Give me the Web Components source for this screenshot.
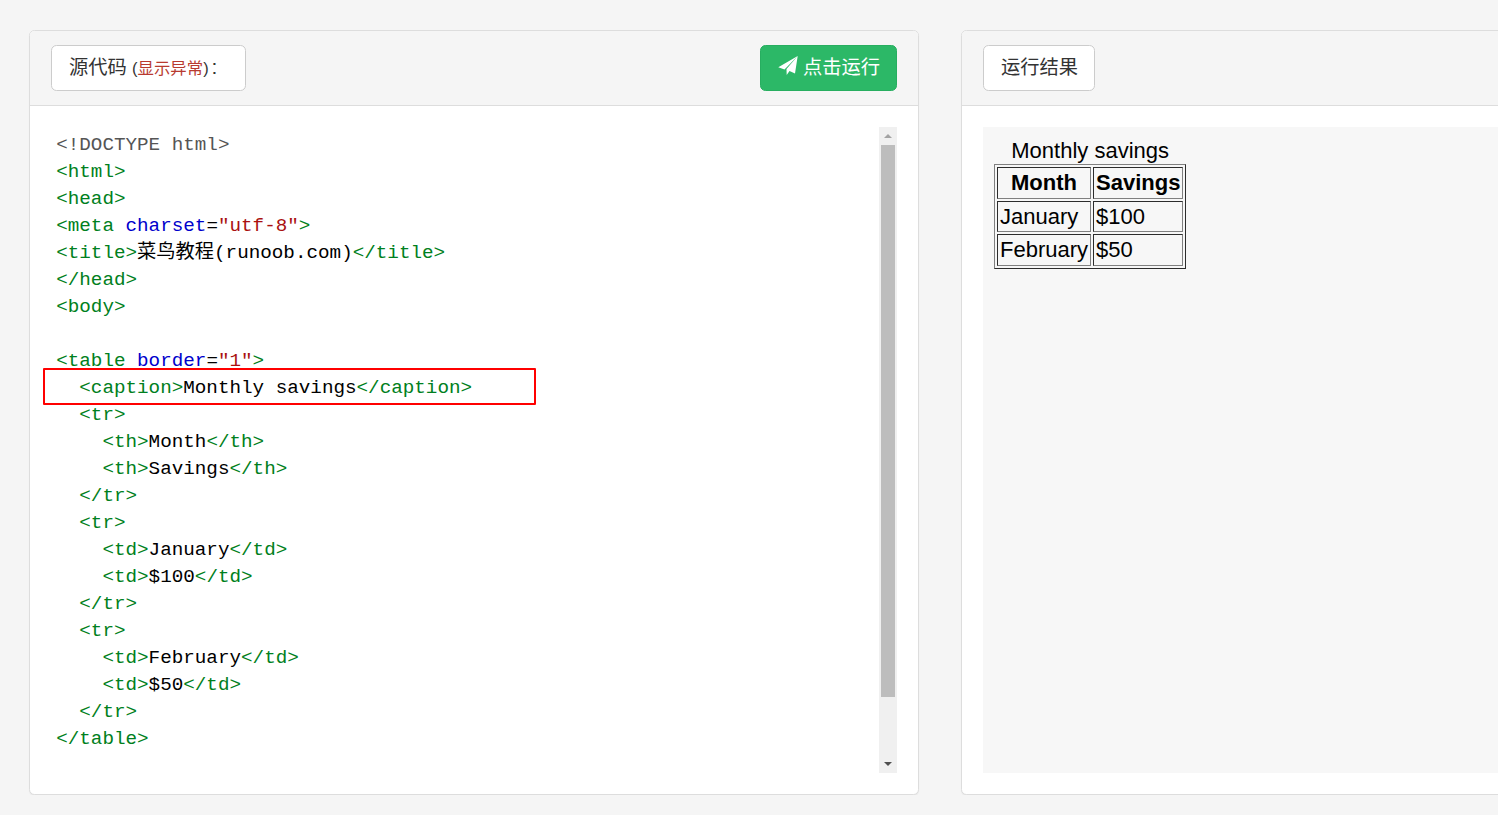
<!DOCTYPE html>
<html lang="zh">
<head>
<meta charset="utf-8">
<title>运行结果</title>
<style>
    html, body { margin: 0; height: 100%; overflow: hidden; background: #f5f5f5; }
    body { font-family: "Liberation Sans", "Noto Sans CJK SC", sans-serif; color: #333; }
    try-label small { font-size: 16.4px; margin-right: 3px; }
    try-label em { font-style: normal; color: #b83a30; }
    try-label b { font-weight: normal; font-size: 21px; line-height: 0; }
</style>
</head>
<body>
<try-page>
    <try-panel>
        <try-label slot="left" style="--pad-right: 28px">源代码 <small>(<em>显示异常</em>)</small><b>:</b></try-label>
        <try-run slot="right">点击运行</try-run>
        <code-view></code-view>
    </try-panel>
    <try-panel>
        <try-label slot="left">运行结果</try-label>
        <result-view></result-view>
    </try-panel>
</try-page>

<script>
// Page shell: two panels side by side, the second one runs off the window
class TryPage extends HTMLElement {
    constructor() {
        super();
        this.attachShadow({ mode: 'open' }).innerHTML = `
            <style>
                :host {
                    display: grid;
                    grid-template-columns: 890px 890px;
                    column-gap: 42px;
                    padding: 30px 0 0 29px;
                    width: 1469px;
                    overflow: hidden;
                }
            </style>
            <slot></slot>
        `;
    }
}

class TryPanel extends HTMLElement {
    constructor() {
        super();
        this.attachShadow({ mode: 'open' }).innerHTML = `
            <style>
                :host {
                    display: flex;
                    flex-direction: column;
                    box-sizing: border-box;
                    height: 765px;
                    background: #fff;
                    border: 1px solid #ddd;
                    border-radius: 5.5px;
                    box-shadow: 0 1px 1px rgba(0, 0, 0, 0.05);
                }
                header {
                    display: flex;
                    justify-content: space-between;
                    align-items: center;
                    height: 75px;
                    box-sizing: border-box;
                    padding: 0 21px;
                    background: #f5f5f5;
                    border-bottom: 1px solid #ddd;
                    border-radius: 4.5px 4.5px 0 0;
                }
                main { flex: 1; min-height: 0; padding: 21px; display: flex; }
            </style>
            <header><slot name="left"></slot><slot name="right"></slot></header>
            <main><slot></slot></main>
        `;
    }
}

class TryLabel extends HTMLElement {
    constructor() {
        super();
        this.attachShadow({ mode: 'open' }).innerHTML = `
            <style>
                :host {
                    display: block;
                    box-sizing: border-box;
                    height: 46px;
                    padding: 0 var(--pad-right, 16px) 0 17px;
                    background: #fff;
                    border: 1px solid #ccc;
                    border-radius: 5.5px;
                    font-size: 19.25px;
                    line-height: 44px;
                    color: #333;
                    white-space: nowrap;
                }
            </style>
            <slot></slot>
        `;
    }
}

class TryRun extends HTMLElement {
    constructor() {
        super();
        this.attachShadow({ mode: 'open' }).innerHTML = `
            <style>
                :host {
                    display: flex;
                    align-items: center;
                    gap: 5px;
                    box-sizing: border-box;
                    height: 46px;
                    padding: 0 16px 0 17px;
                    background: #2cb867;
                    border: 1px solid #27ae60;
                    border-radius: 5.5px;
                    font-size: 19.25px;
                    line-height: 42px;
                    color: #fff;
                }
                svg { width: 20px; height: 20px; display: block; margin-top: -4px; }
                span { display: block; }
            </style>
            <svg viewBox="0 0 20 20"><path fill="#fff" d="M19.7 0 0.3 11.3 6.5 13.5ZM19.7 0 8.5 13 8.7 19 11.5 15 17 17.5Z"/></svg>
            <span><slot></slot></span>
        `;
    }
}

// Source listing with fake scrollbar and the red highlight box
class CodeView extends HTMLElement {
    static lines = [
        [['m', '<!DOCTYPE html>']],
        [['t', '<html>']],
        [['t', '<head>']],
        [['t', '<meta '], ['a', 'charset'], ['p', '='], ['s', '"utf-8"'], ['t', '>']],
        [['t', '<title>'], ['p', '菜鸟教程(runoob.com)'], ['t', '</title>']],
        [['t', '</head>']],
        [['t', '<body>']],
        [],
        [['t', '<table '], ['a', 'border'], ['p', '='], ['s', '"1"'], ['t', '>']],
        [['t', '  <caption>'], ['p', 'Monthly savings'], ['t', '</caption>']],
        [['t', '  <tr>']],
        [['t', '    <th>'], ['p', 'Month'], ['t', '</th>']],
        [['t', '    <th>'], ['p', 'Savings'], ['t', '</th>']],
        [['t', '  </tr>']],
        [['t', '  <tr>']],
        [['t', '    <td>'], ['p', 'January'], ['t', '</td>']],
        [['t', '    <td>'], ['p', '$100'], ['t', '</td>']],
        [['t', '  </tr>']],
        [['t', '  <tr>']],
        [['t', '    <td>'], ['p', 'February'], ['t', '</td>']],
        [['t', '    <td>'], ['p', '$50'], ['t', '</td>']],
        [['t', '  </tr>']],
        [['t', '</table>']],
    ];

    constructor() {
        super();
        const esc = s => s.replace(/&/g, '&amp;').replace(/</g, '&lt;');
        const rows = CodeView.lines.map(line =>
            `<div class="line">${line.map(([c, s]) => `<span class="${c}">${esc(s)}</span>`).join('')}</div>`
        ).join('');
        this.attachShadow({ mode: 'open' }).innerHTML = `
            <style>
                :host { display: flex; flex: 1; min-width: 0; position: relative; }
                .code {
                    flex: 1;
                    padding: 4.5px 5.5px 0 5.2px;
                    font: 19.25px/27px "Liberation Mono", "Noto Sans CJK SC", monospace;
                    white-space: pre;
                }
                .line { height: 27px; }
                .t { color: #008020; }
                .m { color: #555; }
                .a { color: #0000cc; }
                .s { color: #aa1111; }
                .p { color: #000; }
                .bar {
                    width: 18px;
                    display: flex;
                    flex-direction: column;
                    align-items: center;
                    background: #f0f0f0;
                }
                .arrow { height: 18px; flex: none; display: flex; align-items: center; justify-content: center; }
                .arrow i { width: 0; height: 0; border: 4px solid transparent; }
                .up i { border-top: 0; border-bottom: 4px solid #a3a3a3; }
                .down i { border-bottom: 0; border-top: 4px solid #505050; }
                .thumb { width: 14px; height: 552px; flex: none; background: #bdbdbd; }
                .space { flex: 1; }
                .mark {
                    position: absolute;
                    left: -8px;
                    top: 241px;
                    width: 493px;
                    height: 37px;
                    box-sizing: border-box;
                    border: 2px solid #f00;
                    border-radius: 1px;
                }
            </style>
            <div class="code">${rows}</div>
            <div class="bar">
                <div class="arrow up"><i></i></div>
                <div class="thumb"></div>
                <div class="space"></div>
                <div class="arrow down"><i></i></div>
            </div>
            <div class="mark"></div>
        `;
    }
}

// The rendered result: a plain border="1" table, as the browser draws it at 137.5%
class ResultView extends HTMLElement {
    constructor() {
        super();
        this.attachShadow({ mode: 'open' }).innerHTML = `
            <style>
                :host {
                    display: block;
                    flex: 1;
                    padding: 11px;
                    background: #f7f7f7;
                    color: #000;
                }
                table { zoom: 1.375; font-size: 16px; }
                th, td { padding: 1.4545px; }
                tr:nth-child(2) td { padding-bottom: 0.75px; }
            </style>
            <table border="1">
                <caption>Monthly savings</caption>
                <tr><th>Month</th><th>Savings</th></tr>
                <tr><td>January</td><td>$100</td></tr>
                <tr><td>February</td><td>$50</td></tr>
            </table>
        `;
    }
}

customElements.define('try-page', TryPage);
customElements.define('try-panel', TryPanel);
customElements.define('try-label', TryLabel);
customElements.define('try-run', TryRun);
customElements.define('code-view', CodeView);
customElements.define('result-view', ResultView);
</script>
</body>
</html>
